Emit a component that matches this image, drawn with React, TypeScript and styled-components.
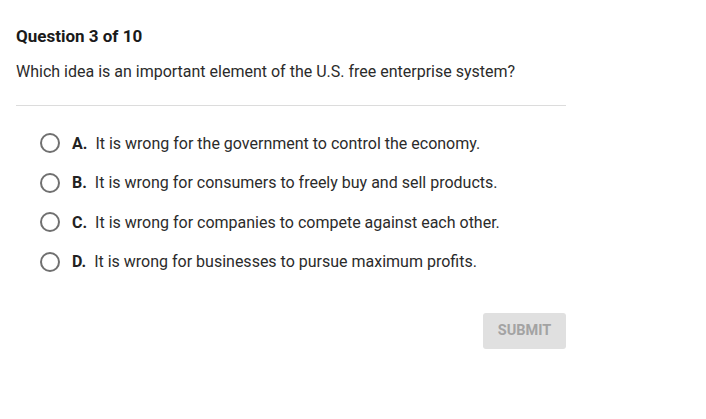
import React from "react";
import styled, { createGlobalStyle } from "styled-components";

const Global = createGlobalStyle`
  html, body { margin: 0; padding: 0; background: #fff; }
  body { font-family: Roboto, "Noto Sans", sans-serif; color: #222; }
`;

const Page = styled.div`
  width: 550px;
  padding: 26px 0 0 16px;
`;

const Title = styled.div`
  font-size: 17px;
  font-weight: 700;
  line-height: 20px;
  color: #1a1a1a;
`;

const Prompt = styled.div`
  margin-top: 16px;
  font-size: 16px;
  line-height: 20px;
  color: #2b2b2b;
`;

const Divider = styled.div`
  margin-top: 23px;
  height: 1px;
  background: #dcdcdc;
`;

const Options = styled.div`
  display: flex;
  flex-direction: column;
  gap: 19.5px;
  padding: 27px 0 0 24px;
`;

const Option = styled.label`
  display: flex;
  align-items: center;
  height: 20px;
  cursor: pointer;
`;

const Radio = styled.span`
  box-sizing: border-box;
  width: 20px;
  height: 20px;
  border: 2px solid #707070;
  border-radius: 50%;
  flex-shrink: 0;
`;

const Letter = styled.span`
  margin-left: 12px;
  margin-right: 8px;
  font-size: 16px;
  font-weight: 700;
  color: #222;
`;

const Text = styled.span`
  font-size: 16px;
  color: #2b2b2b;
`;

const Footer = styled.div`
  display: flex;
  justify-content: flex-end;
  margin-top: 41px;
`;

const Submit = styled.button`
  width: 83px;
  height: 36px;
  border: none;
  border-radius: 3px;
  background: #e0e0e0;
  color: #a3a3a3;
  font-family: Roboto, sans-serif;
  font-size: 14.5px;
  font-weight: 700;
  padding: 0;
`;

const options = [
  { l: "A.", t: "It is wrong for the government to control the economy." },
  { l: "B.", t: "It is wrong for consumers to freely buy and sell products." },
  { l: "C.", t: "It is wrong for companies to compete against each other." },
  { l: "D.", t: "It is wrong for businesses to pursue maximum profits." },
];

export default function App() {
  return (
    <>
      <Global />
      <Page>
        <Title>Question 3 of 10</Title>
        <Prompt>Which idea is an important element of the U.S. free enterprise system?</Prompt>
        <Divider />
        <Options>
          {options.map((o) => (
            <Option key={o.l}>
              <Radio />
              <Letter>{o.l}</Letter>
              <Text>{o.t}</Text>
            </Option>
          ))}
        </Options>
        <Footer>
          <Submit>SUBMIT</Submit>
        </Footer>
      </Page>
    </>
  );
}
